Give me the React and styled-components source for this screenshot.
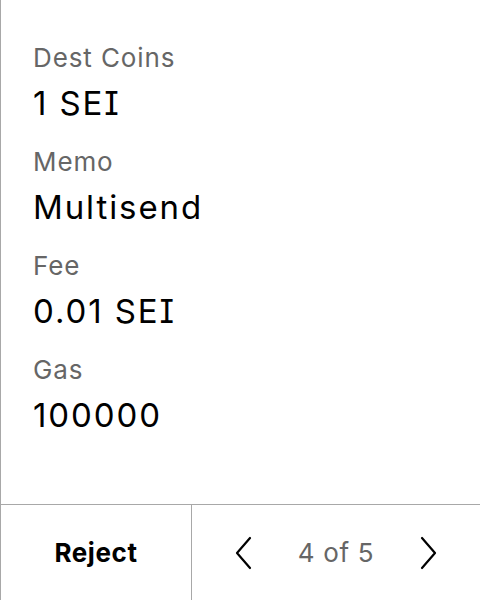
import styled, { createGlobalStyle } from "styled-components";

const Global = createGlobalStyle`
  html, body {
    margin: 0;
    padding: 0;
    background: #fff;
    font-family: Inter, "Noto Sans", sans-serif;
    font-feature-settings: "cv08";
  }
`;

const Screen = styled.div`
  width: 480px;
  height: 600px;
  box-sizing: border-box;
  border-left: 1px solid #a8a8a8;
  display: flex;
  flex-direction: column;
`;

const Details = styled.div`
  flex: 1;
  padding: 40px 0 0 32px;
  display: flex;
  flex-direction: column;
  gap: 14px;
`;

const Field = styled.div`
  display: flex;
  flex-direction: column;
`;

const Label = styled.div`
  font-size: 26px;
  line-height: 36px;
  letter-spacing: 0.9px;
  color: #666;
`;

const Value = styled.div`
  font-size: 33px;
  line-height: 54px;
  letter-spacing: 1.9px;
  color: #000;
`;

const Footer = styled.div`
  height: 95px;
  border-top: 1px solid #a8a8a8;
  display: grid;
  grid-template-columns: 191px 1fr;
`;

const RejectButton = styled.button`
  all: unset;
  display: flex;
  align-items: center;
  justify-content: center;
  font-family: Inter, sans-serif;
  font-weight: 700;
  font-size: 26px;
  letter-spacing: 0.6px;
  color: #000;
  border-right: 1px solid #a8a8a8;
`;

const Pager = styled.div`
  display: flex;
  align-items: center;
  justify-content: center;
  gap: 44px;
`;

const PageText = styled.span`
  font-size: 26px;
  letter-spacing: 0.7px;
  color: #666;
`;

const Chevron = ({ dir }) => (
  <svg width="20" height="34" viewBox="0 0 20 34" fill="none">
    <path
      d={dir === "left" ? "M16 2 L3 17 L16 32" : "M4 2 L17 17 L4 32"}
      stroke="#000"
      strokeWidth="2.2"
      strokeLinecap="round"
      strokeLinejoin="round"
    />
  </svg>
);

const fields = [
  { label: "Dest Coins", value: "1 SEI" },
  { label: "Memo", value: "Multisend" },
  { label: "Fee", value: "0.01 SEI" },
  { label: "Gas", value: "100000" },
];

export default function App() {
  return (
    <>
      <Global />
      <Screen>
        <Details>
          {fields.map((f) => (
            <Field key={f.label}>
              <Label>{f.label}</Label>
              <Value>{f.value}</Value>
            </Field>
          ))}
        </Details>
        <Footer>
          <RejectButton>Reject</RejectButton>
          <Pager>
            <Chevron dir="left" />
            <PageText>4 of 5</PageText>
            <Chevron dir="right" />
          </Pager>
        </Footer>
      </Screen>
    </>
  );
}
